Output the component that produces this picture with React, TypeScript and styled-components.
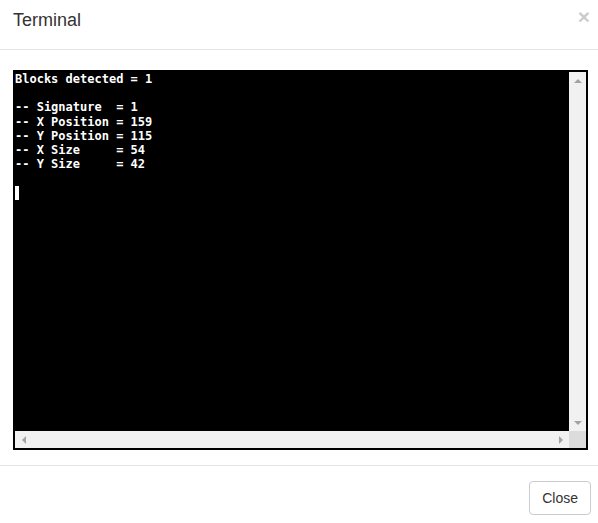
import React from "react";
import styled, { createGlobalStyle } from "styled-components";

const Global = createGlobalStyle`
  html, body { margin: 0; padding: 0; background: #fff; }
  body { font-family: "Liberation Sans", Arial, sans-serif; color: #333; overflow: hidden; }
  * { box-sizing: border-box; }
`;

const Modal = styled.div`
  width: 598px;
  display: flex;
  flex-direction: column;
`;

const Header = styled.div`
  height: 50px;
  border-bottom: 1px solid #e5e5e5;
  display: flex;
  justify-content: space-between;
  align-items: flex-start;
  padding: 0 8px 0 13px;
`;

const Title = styled.h4`
  margin: 0;
  padding-top: 8px;
  font-size: 18px;
  font-weight: 400;
  line-height: 25px;
  color: #333;
`;

const CloseX = styled.button`
  border: 0;
  background: transparent;
  padding: 0;
  margin-top: 6px;
  font-family: "Liberation Sans", Arial, sans-serif;
  font-size: 21px;
  font-weight: 700;
  line-height: 21px;
  color: #000;
  opacity: 0.2;
  cursor: pointer;
`;

const Body = styled.div`
  padding: 20px 10px 15px 13px;
  border-bottom: 1px solid #e5e5e5;
`;

const Terminal = styled.div`
  height: 380px;
  border: 2px solid #000;
  background: #000;
  display: grid;
  grid-template-columns: 1fr 17px;
  grid-template-rows: 1fr 17px;
`;

const Screen = styled.pre`
  margin: 0;
  padding: 0;
  font-family: "DejaVu Sans Mono", "Liberation Mono", monospace;
  font-size: 12px;
  font-weight: 700;
  line-height: 14.2px;
  color: #fff;
  overflow: hidden;
  white-space: pre;
`;

const Cursor = styled.span`
  display: inline-block;
  width: 4px;
  height: 14px;
  background: #fff;
  vertical-align: 0;
`;

const Track = styled.div<{ $vertical?: boolean }>`
  background: #f1f1f1;
  display: flex;
  flex-direction: ${(p) => (p.$vertical ? "column" : "row")};
  justify-content: space-between;
`;

const Arrow = styled.div`
  width: 17px;
  height: 17px;
  display: flex;
  align-items: center;
  justify-content: center;
`;

const Corner = styled.div`
  background: #dcdcdc;
`;

const Footer = styled.div`
  display: flex;
  justify-content: flex-end;
  padding: 15px 7px 15px 15px;
`;

const Button = styled.button`
  font-family: "Liberation Sans", Arial, sans-serif;
  font-size: 14px;
  line-height: 20px;
  padding: 6px 12px;
  color: #333;
  background: #fff;
  border: 1px solid #ccc;
  border-radius: 4px;
  cursor: pointer;
`;

const Tri = ({ dir }: { dir: "up" | "down" | "left" | "right" }) => {
  const pts = {
    up: "0,4 4,0 8,4",
    down: "0,0 8,0 4,4",
    left: "4,0 4,8 0,4",
    right: "0,0 4,4 0,8",
  }[dir];
  const horiz = dir === "up" || dir === "down";
  return (
    <svg width={horiz ? 8 : 4} height={horiz ? 4 : 8} viewBox={horiz ? "0 0 8 4" : "0 0 4 8"}>
      <polygon points={pts} fill="#a3a3a3" />
    </svg>
  );
};

const output = `Blocks detected = 1

-- Signature  = 1
-- X Position = 159
-- Y Position = 115
-- X Size     = 54
-- Y Size     = 42

`;

export default function App() {
  return (
    <>
      <Global />
      <Modal>
        <Header>
          <Title>Terminal</Title>
          <CloseX aria-label="Close">×</CloseX>
        </Header>
        <Body>
          <Terminal>
            <Screen>
              {output}
              <Cursor />
            </Screen>
            <Track $vertical>
              <Arrow><Tri dir="up" /></Arrow>
              <Arrow><Tri dir="down" /></Arrow>
            </Track>
            <Track>
              <Arrow><Tri dir="left" /></Arrow>
              <Arrow><Tri dir="right" /></Arrow>
            </Track>
            <Corner />
          </Terminal>
        </Body>
        <Footer>
          <Button>Close</Button>
        </Footer>
      </Modal>
    </>
  );
}
